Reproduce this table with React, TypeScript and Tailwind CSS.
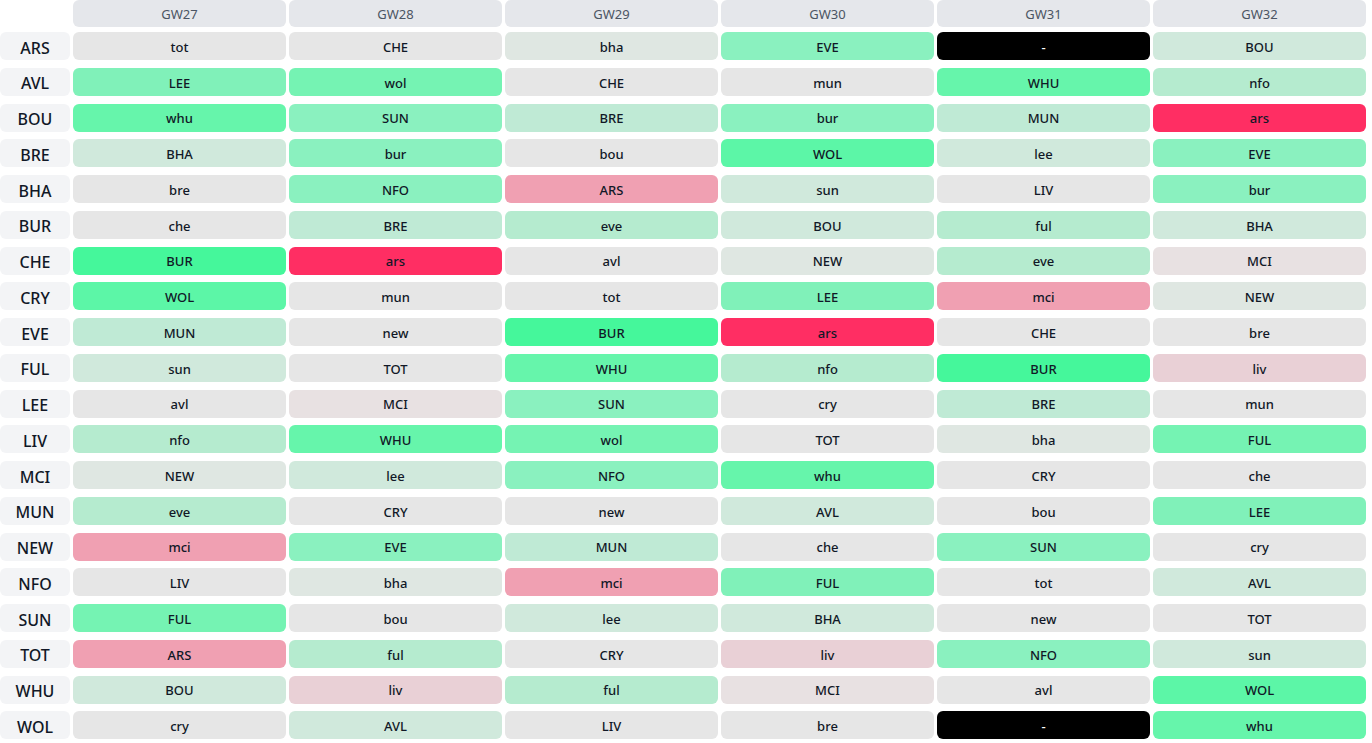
import React from "react";

const C: Record<string, string> = {
  n: "bg-[#e6e6e6]",
  g1: "bg-[#dfe7e2]",
  g2: "bg-[#d0e9dc]",
  g3: "bg-[#bfead5]",
  g4: "bg-[#b5ebcf]",
  g6: "bg-[#8af1bf]",
  g7: "bg-[#80f1b9]",
  g8: "bg-[#75f3b3]",
  g9: "bg-[#66f5ab]",
  g10: "bg-[#5cf6a7]",
  g11: "bg-[#45f79b]",
  r1: "bg-[#e8e1e2]",
  r2: "bg-[#e9d0d6]",
  r3: "bg-[#f0a0b2]",
  r4: "bg-[#ff2e63]",
  k: "bg-black text-white",
};

const rows: [string, [string, string][]][] = [
  ["ARS", [["tot", "n"], ["CHE", "n"], ["bha", "g1"], ["EVE", "g6"], ["-", "k"], ["BOU", "g2"]]],
  ["AVL", [["LEE", "g7"], ["wol", "g8"], ["CHE", "n"], ["mun", "n"], ["WHU", "g9"], ["nfo", "g4"]]],
  ["BOU", [["whu", "g9"], ["SUN", "g6"], ["BRE", "g3"], ["bur", "g6"], ["MUN", "g3"], ["ars", "r4"]]],
  ["BRE", [["BHA", "g2"], ["bur", "g6"], ["bou", "n"], ["WOL", "g10"], ["lee", "g2"], ["EVE", "g6"]]],
  ["BHA", [["bre", "n"], ["NFO", "g6"], ["ARS", "r3"], ["sun", "g2"], ["LIV", "n"], ["bur", "g6"]]],
  ["BUR", [["che", "n"], ["BRE", "g3"], ["eve", "g4"], ["BOU", "g2"], ["ful", "g4"], ["BHA", "g2"]]],
  ["CHE", [["BUR", "g11"], ["ars", "r4"], ["avl", "n"], ["NEW", "g1"], ["eve", "g4"], ["MCI", "r1"]]],
  ["CRY", [["WOL", "g10"], ["mun", "n"], ["tot", "n"], ["LEE", "g7"], ["mci", "r3"], ["NEW", "g1"]]],
  ["EVE", [["MUN", "g3"], ["new", "n"], ["BUR", "g11"], ["ars", "r4"], ["CHE", "n"], ["bre", "n"]]],
  ["FUL", [["sun", "g2"], ["TOT", "n"], ["WHU", "g9"], ["nfo", "g4"], ["BUR", "g11"], ["liv", "r2"]]],
  ["LEE", [["avl", "n"], ["MCI", "r1"], ["SUN", "g6"], ["cry", "n"], ["BRE", "g3"], ["mun", "n"]]],
  ["LIV", [["nfo", "g4"], ["WHU", "g9"], ["wol", "g8"], ["TOT", "n"], ["bha", "g1"], ["FUL", "g8"]]],
  ["MCI", [["NEW", "g1"], ["lee", "g2"], ["NFO", "g6"], ["whu", "g9"], ["CRY", "n"], ["che", "n"]]],
  ["MUN", [["eve", "g4"], ["CRY", "n"], ["new", "n"], ["AVL", "g2"], ["bou", "n"], ["LEE", "g7"]]],
  ["NEW", [["mci", "r3"], ["EVE", "g6"], ["MUN", "g3"], ["che", "n"], ["SUN", "g6"], ["cry", "n"]]],
  ["NFO", [["LIV", "n"], ["bha", "g1"], ["mci", "r3"], ["FUL", "g7"], ["tot", "n"], ["AVL", "g2"]]],
  ["SUN", [["FUL", "g8"], ["bou", "n"], ["lee", "g2"], ["BHA", "g2"], ["new", "n"], ["TOT", "n"]]],
  ["TOT", [["ARS", "r3"], ["ful", "g4"], ["CRY", "n"], ["liv", "r2"], ["NFO", "g6"], ["sun", "g2"]]],
  ["WHU", [["BOU", "g2"], ["liv", "r2"], ["ful", "g4"], ["MCI", "r1"], ["avl", "n"], ["WOL", "g10"]]],
  ["WOL", [["cry", "n"], ["AVL", "g2"], ["LIV", "n"], ["bre", "n"], ["-", "k"], ["whu", "g9"]]],
];

const gws = ["GW27", "GW28", "GW29", "GW30", "GW31", "GW32"];

export default function App() {
  return (
    <div
      className="w-[1372px] h-[743px] bg-white overflow-hidden"
      style={{ fontFamily: '"Noto Sans", "Open Sans", sans-serif' }}
    >
      <div className="w-[1366px] grid grid-cols-[70px_repeat(6,213px)] gap-x-[3px] mb-[5px]">
        <div />
        {gws.map((g) => (
          <div
            key={g}
            className="h-[27px] pt-[2px] rounded-md bg-[#e5e7eb] flex items-center justify-center text-[13px] text-[#4b5563]"
          >
            {g}
          </div>
        ))}
      </div>
      <div className="w-[1366px] grid grid-cols-[70px_repeat(6,213px)] gap-x-[3px] gap-y-[7.75px]">
        {rows.map(([team, cells]) => (
          <React.Fragment key={team}>
            <div className="h-[28px] pt-[3px] rounded-md bg-[#f3f4f6] flex items-center justify-center text-[16px] font-medium text-[#111827]">
              {team}
            </div>
            {cells.map(([t, c], i) => (
              <div
                key={i}
                className={`h-[28px] pt-[3px] rounded-md flex items-center justify-center text-[13px] font-medium text-[#111827] ${C[c]}`}
              >
                {c === "k" ? <span className="text-white">{t}</span> : t}
              </div>
            ))}
          </React.Fragment>
        ))}
      </div>
    </div>
  );
}
